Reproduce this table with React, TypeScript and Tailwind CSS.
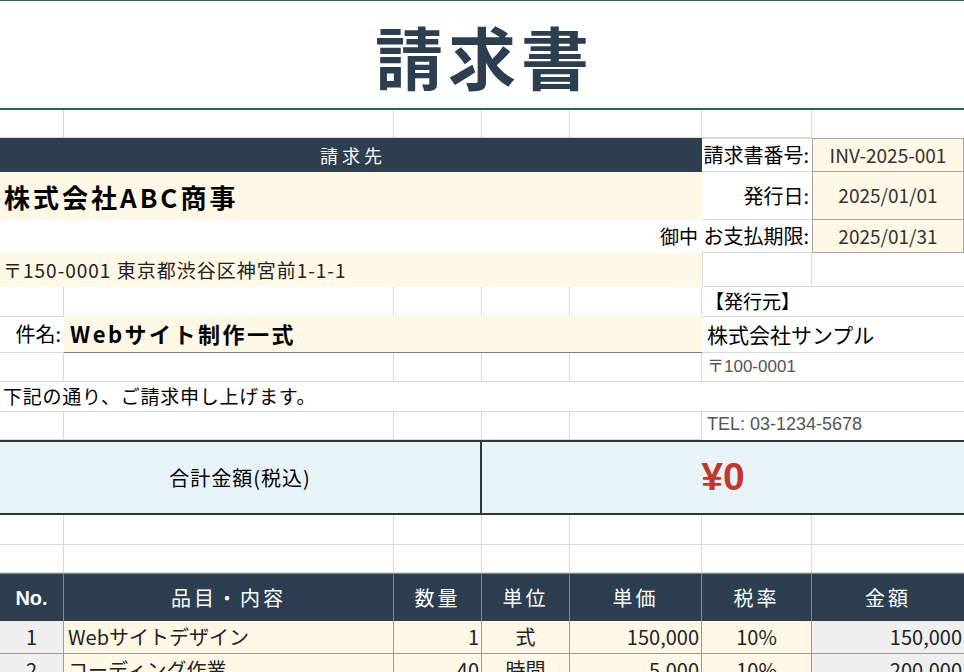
import React from 'react';

const grid = 'grid grid-cols-[64px_330px_88px_88px_132px_110px_152px]';
const line = 'border-[#d9d9d9]';

function EmptyCells({ count, last = false }: { count: number; last?: boolean }) {
  return (
    <>
      {Array.from({ length: count }).map((_, i) => (
        <div
          key={i}
          className={`border-b ${line} ${last && i === count - 1 ? '' : 'border-r'}`}
        />
      ))}
    </>
  );
}

const items = [
  { no: 1, name: 'Webサイトデザイン', qty: '1', unit: '式', price: '150,000', tax: '10%', amount: '150,000' },
  { no: 2, name: 'コーディング作業', qty: '40', unit: '時間', price: '5,000', tax: '10%', amount: '200,000' },
];

export default function App() {
  return (
    <div className="w-[964px] h-[672px] overflow-hidden bg-white text-black font-['Noto_Sans_CJK_JP','Noto_Sans',sans-serif]">
      {/* title */}
      <div className="h-[110px] border-t border-b-2 border-[#2f6650] flex items-center justify-center">
        <h1 className="text-[68px] font-bold leading-none text-[#2c3e50] tracking-[5px] pl-[5px] mt-[2px]">
          請求書
        </h1>
      </div>

      <div className={`${grid} h-[28px]`}>
        <EmptyCells count={6} />
        <div />
      </div>

      {/* billing to / meta */}
      <div className={`${grid} h-[34px]`}>
        <div className="col-span-5 bg-[#2c3e50] text-white text-[18px] tracking-[4px] flex items-center justify-center pl-[4px]">
          請求先
        </div>
        <div className={`border-t border-b ${line} flex items-center justify-end pr-[3px] text-[20px] whitespace-nowrap`}>
          請求書番号:
        </div>
        <div className="bg-[#fff8e7] border border-[#a6a6a6] flex items-center justify-center text-[19px] text-[#333]">
          INV-2025-001
        </div>
      </div>
      <div className={`${grid} h-[48px]`}>
        <div className="col-span-5 bg-[#fff8e7] flex items-center pl-[4px] text-[26px] font-bold tracking-[3px]">
          株式会社ABC商事
        </div>
        <div className={`border-b ${line} flex items-center justify-end pr-[3px] text-[20px] whitespace-nowrap`}>
          発行日:
        </div>
        <div className="bg-[#fff8e7] border-x border-b border-[#a6a6a6] flex items-center justify-center text-[19px] text-[#333]">
          2025/01/01
        </div>
      </div>
      <div className={`${grid} h-[33px]`}>
        <div className="col-span-5 flex items-center justify-end pr-[4px] text-[19px]">御中</div>
        <div className={`border-b ${line} flex items-center justify-end pr-[3px] text-[20px] whitespace-nowrap`}>
          お支払期限:
        </div>
        <div className="bg-[#fff8e7] border-x border-b border-[#a6a6a6] flex items-center justify-center text-[19px] text-[#333]">
          2025/01/31
        </div>
      </div>
      <div className={`${grid} h-[34px]`}>
        <div className="col-span-5 bg-[#fff8e7] flex items-center pl-[3px] text-[19px] tracking-[1px] text-[#222]">
          〒150-0001 東京都渋谷区神宮前1-1-1
        </div>
        <div className={`border-l border-r border-b ${line}`} />
        <div className={`border-b ${line}`} />
      </div>

      {/* subject / issuer */}
      <div className={`${grid} h-[28px]`}>
        <EmptyCells count={5} />
        <div className={`col-span-2 border-b ${line} flex items-center pl-[3px] text-[19px]`}>【発行元】</div>
      </div>
      <div className={`${grid} h-[38px]`}>
        <div className={`border-b ${line} flex items-center justify-end pr-[3px] text-[20px]`}>件名:</div>
        <div className="col-span-4 bg-[#fff8e7] border-b border-[#808080] flex items-center pl-[6px] text-[22px] font-bold tracking-[2.5px]">
          Webサイト制作一式
        </div>
        <div className={`col-span-2 border-b ${line} flex items-end pb-[2px] pl-[5px] text-[21px]`}>
          株式会社サンプル
        </div>
      </div>
      <div className={`${grid} h-[29px]`}>
        <EmptyCells count={5} />
        <div className={`col-span-2 border-b ${line} flex items-center pl-[5px] text-[17px] text-[#555] font-['Liberation_Sans','Noto_Sans_CJK_JP',sans-serif]`}>
          〒100-0001
        </div>
      </div>
      <div className={`${grid} h-[29px]`}>
        <div className={`col-span-7 border-b ${line} flex items-center pl-[3px] text-[19px] tracking-[0.75px]`}>
          下記の通り、ご請求申し上げます。
        </div>
      </div>
      <div className={`${grid} h-[29px]`}>
        <EmptyCells count={5} />
        <div className="col-span-2 flex items-end pb-[2px] pl-[5px] text-[18px] text-[#555] font-['Liberation_Sans',sans-serif]">
          TEL: 03-1234-5678
        </div>
      </div>

      {/* total */}
      <div className={`${grid} h-[75px] bg-[#e8f3f8] border-y-2 border-[#333]`}>
        <div className="col-span-3 border-r-2 border-[#333] flex items-center justify-center text-[20px] tracking-[1px]">
          合計金額(税込)
        </div>
        <div className="col-span-4 flex items-center justify-center text-[39px] font-bold text-[#c0392b] font-['Liberation_Sans',sans-serif]">
          ¥0
        </div>
      </div>

      <div className={`${grid} h-[30px]`}>
        <EmptyCells count={7} last />
      </div>
      <div className={`${grid} h-[28px]`}>
        <EmptyCells count={7} last />
      </div>

      {/* line items */}
      <div className={`${grid} h-[48px] bg-[#2c3e50] text-white text-[20px] border-t border-[#888]`}>
        <div className="border-r border-[#888] flex items-center justify-center font-bold font-['Liberation_Sans',sans-serif]">No.</div>
        <div className="border-r border-[#888] flex items-center justify-center tracking-[3px]">品目・内容</div>
        <div className="border-r border-[#888] flex items-center justify-center tracking-[3px]">数量</div>
        <div className="border-r border-[#888] flex items-center justify-center tracking-[3px]">単位</div>
        <div className="border-r border-[#888] flex items-center justify-center tracking-[3px]">単価</div>
        <div className="border-r border-[#888] flex items-center justify-center tracking-[3px]">税率</div>
        <div className="flex items-center justify-center tracking-[3px]">金額</div>
      </div>
      {items.map((it) => (
        <div key={it.no} className={`${grid} h-[33px] text-[20px] text-[#222]`}>
          <div className="bg-[#efefef] border-r border-b border-[#999] flex items-center justify-center">{it.no}</div>
          <div className="bg-[#fff8e7] border-r border-b border-[#999] flex items-center pl-[4px]">{it.name}</div>
          <div className="bg-[#fff8e7] border-r border-b border-[#999] flex items-center justify-end pr-[2px]">{it.qty}</div>
          <div className="bg-[#fff8e7] border-r border-b border-[#999] flex items-center justify-center">{it.unit}</div>
          <div className="bg-[#fff8e7] border-r border-b border-[#999] flex items-center justify-end pr-[2px]">{it.price}</div>
          <div className="bg-[#fff8e7] border-r border-b border-[#999] flex items-center justify-center">{it.tax}</div>
          <div className="bg-[#efefef] border-b border-[#999] flex items-center justify-end pr-[2px]">{it.amount}</div>
        </div>
      ))}
    </div>
  );
}
